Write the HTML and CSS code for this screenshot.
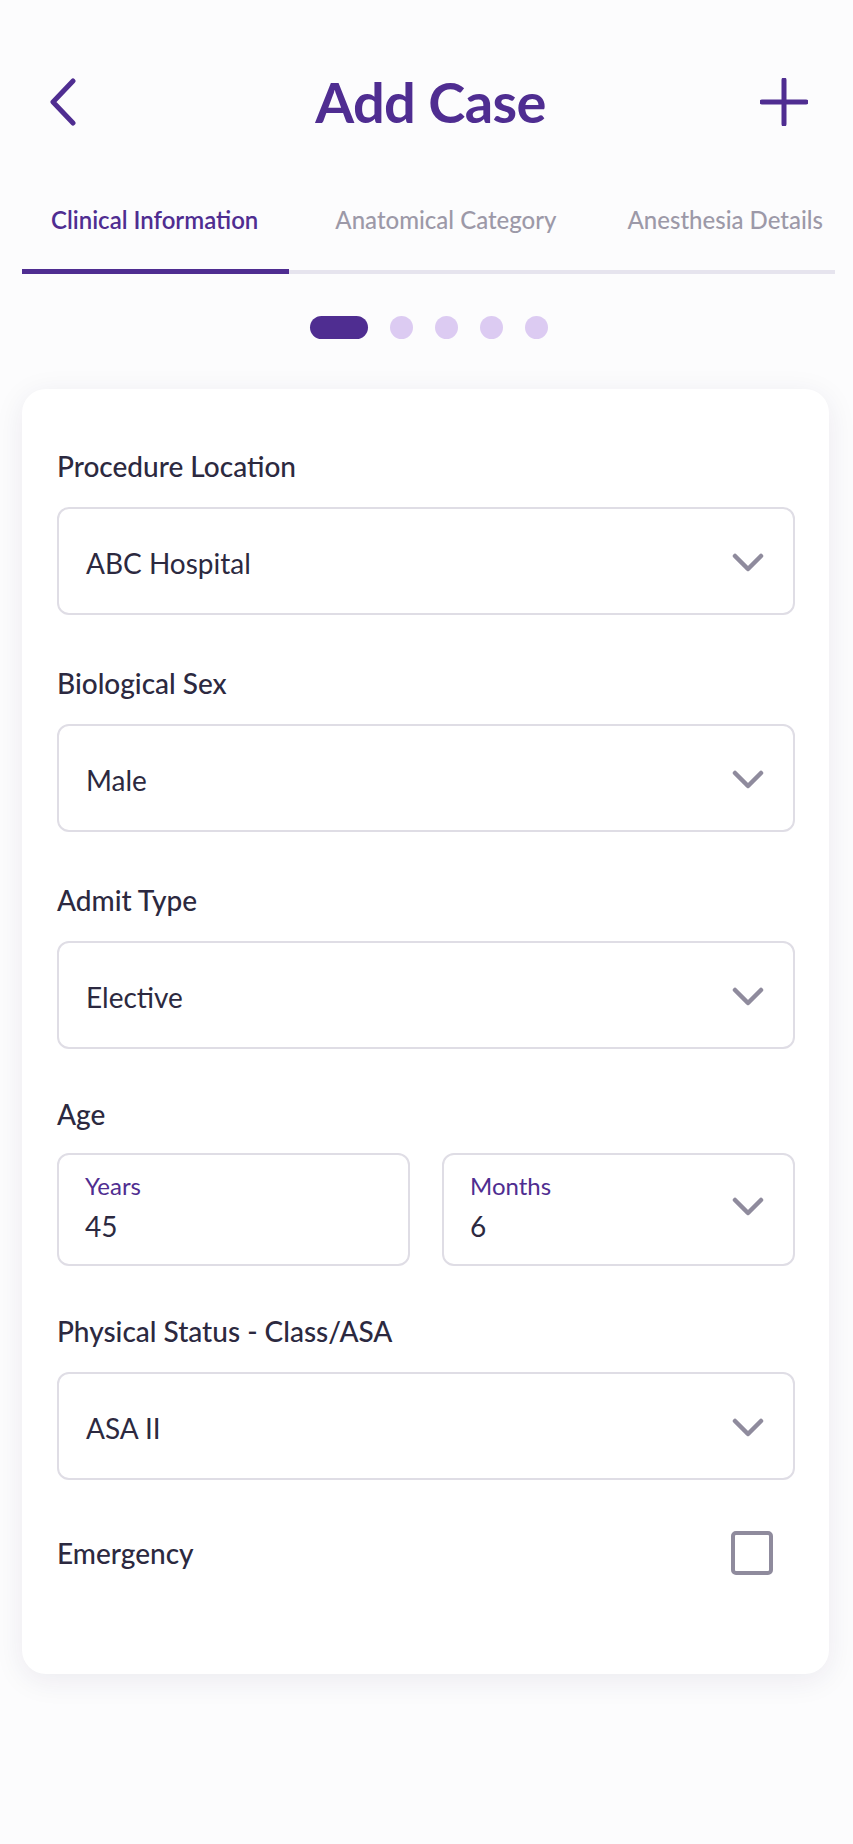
FILE: index.html
```html
<!DOCTYPE html>
<html lang="en">

<head>
  <meta charset="UTF-8" />
  <meta name="viewport" content="width=device-width, initial-scale=1" />
  <title>Add Case</title>
  <link rel="stylesheet" href="styles.css">
</head>

<body>
  <header class="topbar">
    <svg class="back" width="28" height="48" viewBox="0 0 28 48">
      <path d="M24 3 L4 24 L24 45" />
    </svg>
    <h1>Add Case</h1>
    <svg class="plus" width="48" height="48" viewBox="0 0 48 48">
      <path d="M24 2 V46 M2 24 H46" />
    </svg>
  </header>

  <nav class="tabs">
    <span class="tab active">Clinical Information</span>
    <span class="tab">Anatomical Category</span>
    <span class="tab">Anesthesia Details</span>
  </nav>

  <div class="steps">
    <span class="step current"></span>
    <span class="step"></span>
    <span class="step"></span>
    <span class="step"></span>
    <span class="step"></span>
  </div>

  <form class="card">
    <div class="field">
      <label>Procedure Location</label>
      <div class="select">
        <span>ABC Hospital</span>
        <svg class="chevron" width="34" height="22" viewBox="0 0 34 22"><path d="M4 4 L17 17 L30 4" /></svg>
      </div>
    </div>

    <div class="field">
      <label>Biological Sex</label>
      <div class="select">
        <span>Male</span>
        <svg class="chevron" width="34" height="22" viewBox="0 0 34 22"><path d="M4 4 L17 17 L30 4" /></svg>
      </div>
    </div>

    <div class="field">
      <label>Admit Type</label>
      <div class="select">
        <span>Elective</span>
        <svg class="chevron" width="34" height="22" viewBox="0 0 34 22"><path d="M4 4 L17 17 L30 4" /></svg>
      </div>
    </div>

    <div class="field field-age">
      <label class="age-label">Age</label>
      <div class="age-row">
        <div class="age-box">
          <div>
            <span class="mini">Years</span>
            <span class="value">45</span>
          </div>
        </div>
        <div class="age-box">
          <div>
            <span class="mini">Months</span>
            <span class="value">6</span>
          </div>
          <svg class="chevron" width="34" height="22" viewBox="0 0 34 22"><path d="M4 4 L17 17 L30 4" /></svg>
        </div>
      </div>
    </div>

    <div class="field field-tight">
      <label>Physical Status - Class/ASA</label>
      <div class="select">
        <span>ASA II</span>
        <svg class="chevron" width="34" height="22" viewBox="0 0 34 22"><path d="M4 4 L17 17 L30 4" /></svg>
      </div>
    </div>

    <div class="check-row">
      <span>Emergency</span>
      <span class="checkbox"></span>
    </div>
  </form>
</body>

</html>
```

FILE: styles.css
```css
* {
  margin: 0;
  padding: 0;
  box-sizing: border-box;
}

body {
  font-family: 'Lato', 'Open Sans', sans-serif;
  background: #fcfcfd;
  color: #2c2940;
  min-height: 100vh;
}

/* header */
.topbar {
  display: grid;
  grid-template-columns: 1fr auto 1fr;
  align-items: center;
  padding: 67px 45px 0 49px;
  height: 137px;
}

.topbar .plus {
  justify-self: end;
}

.topbar h1 {
  font-size: 56px;
  line-height: 70px;
  font-weight: 700;
  color: #4f2d91;
  letter-spacing: -0.6px;
  margin-left: 4px;
}

.topbar svg path {
  fill: none;
  stroke: #4f2d91;
  stroke-width: 5;
  stroke-linecap: round;
  stroke-linejoin: round;
}

/* tabs */
.tabs {
  display: flex;
  gap: 17px;
  margin: 68px 18px 0 22px;
  border-bottom: 4px solid #e6e4ee;
}

.tab {
  flex: none;
  white-space: nowrap;
  padding: 0 31px 34px 29px;
  font-size: 24px;
  line-height: 30px;
  font-weight: 500;
  color: #9c99a8;
}

.tab:last-child {
  margin-left: -6px;
}

.tab.active {
  color: #4f2d91;
  font-weight: 600;
  border-bottom: 5px solid #4f2d91;
  margin-bottom: -4px;
}

/* step dots */
.steps {
  display: flex;
  justify-content: center;
  gap: 22px;
  margin-top: 42px;
  padding-left: 4px;
}

.step {
  width: 23px;
  height: 23px;
  border-radius: 12px;
  background: #dccbf2;
}

.step.current {
  width: 58px;
  background: #4f2d91;
}

/* card */
.card {
  margin: 50px 24px 0 22px;
  padding: 60px 34px 99px 35px;
  background: #ffffff;
  border-radius: 24px;
  box-shadow: 0 6px 30px rgba(40, 30, 80, 0.08);
}

.field + .field {
  margin-top: 51px;
}

.field + .field-age {
  margin-top: 48px;
}

.field + .field-tight {
  margin-top: 48px;
}

label {
  display: block;
  font-size: 28px;
  line-height: 34px;
  font-weight: 500;
  color: #2c2940;
  margin-bottom: 24px;
}

.age-label {
  margin-bottom: 22px;
}

.select {
  display: flex;
  align-items: center;
  justify-content: space-between;
  height: 108px;
  padding: 4px 28px 0 27px;
  border: 2px solid #dfdde5;
  border-radius: 12px;
  font-size: 28px;
  line-height: 34px;
}

.chevron path {
  fill: none;
  stroke: #8f8b9d;
  stroke-width: 4.5;
  stroke-linecap: round;
  stroke-linejoin: round;
}

/* age */
.age-row {
  display: grid;
  grid-template-columns: 1fr 1fr;
  gap: 32px;
}

.age-box {
  display: flex;
  align-items: center;
  justify-content: space-between;
  height: 113px;
  padding: 16px 28px 21px 26px;
  border: 2px solid #dfdde5;
  border-radius: 12px;
}

.mini {
  display: block;
  font-size: 24px;
  line-height: 30px;
  color: #4f2d91;
}

.value {
  display: block;
  margin-top: 8px;
  font-size: 28px;
  line-height: 34px;
}

/* emergency */
.check-row {
  display: flex;
  align-items: center;
  justify-content: space-between;
  margin-top: 51px;
  font-size: 28px;
  line-height: 34px;
  font-weight: 500;
}

.checkbox {
  width: 42px;
  height: 44px;
  margin-right: 22px;
  border: 4px solid #8f8b9d;
  border-radius: 5px;
}
```
